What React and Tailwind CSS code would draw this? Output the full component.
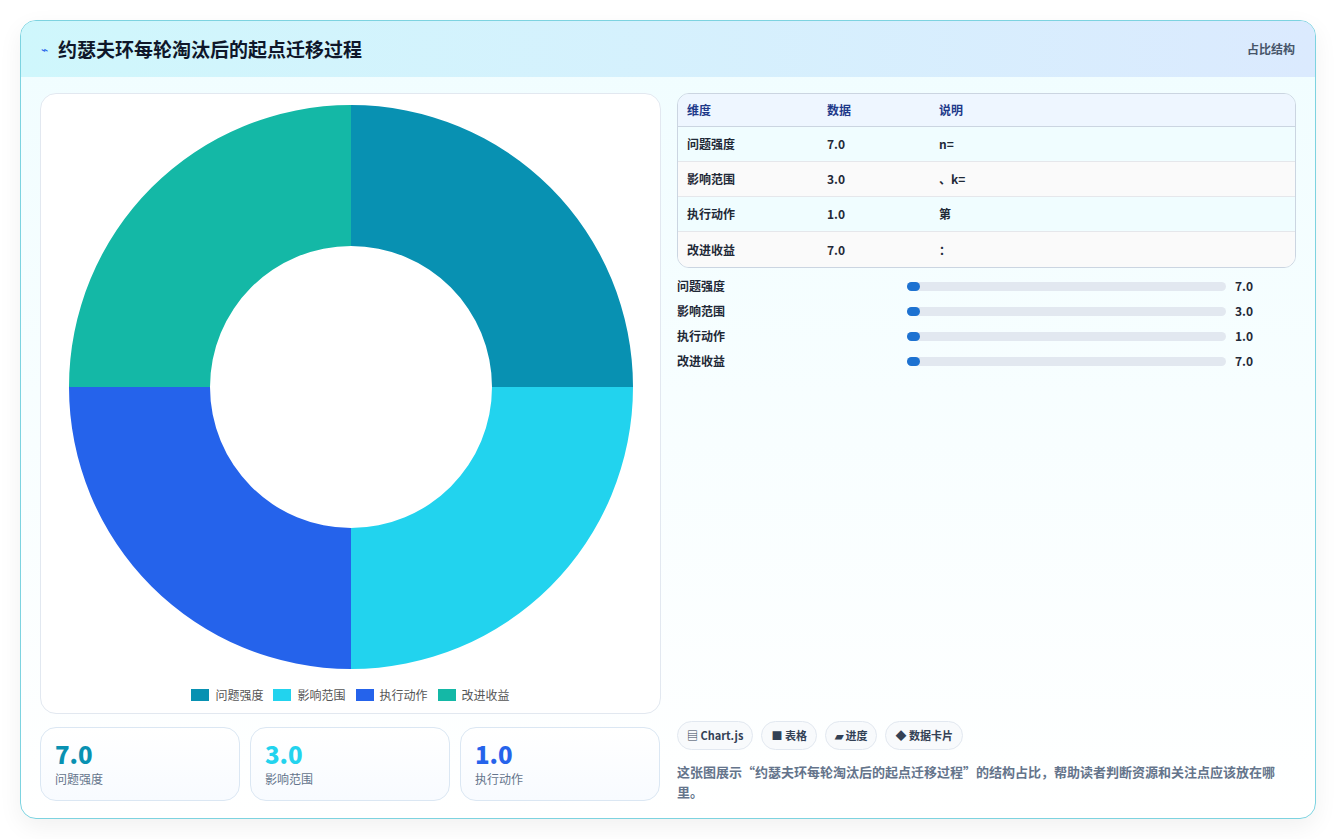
const F = { fontFamily: '"Noto Sans CJK SC","Noto Sans",sans-serif' };
const rows = [["问题强度","7.0","n="],["影响范围","3.0","、k="],["执行动作","1.0","第"],["改进收益","7.0","："]];
const cols = ["#0891b2","#22d3ee","#2563eb","#14b8a6"];
function arc(cx,cy,R,r,a0,a1){const p=(rad,a)=>[cx+rad*Math.sin(a),cy-rad*Math.cos(a)];const[x1,y1]=p(R,a0),[x2,y2]=p(R,a1),[x3,y3]=p(r,a1),[x4,y4]=p(r,a0);return `M${x1} ${y1}A${R} ${R} 0 0 1 ${x2} ${y2}L${x3} ${y3}A${r} ${r} 0 0 0 ${x4} ${y4}Z`;}
export default function App(){
  return <div style={F} className="w-[1336px] h-[839px] bg-white pt-[20px] pl-[20px]">
    <div className="w-[1296px] h-[799px] rounded-2xl border border-[#7dd3e0] bg-gradient-to-b from-[#f0fdff] to-white shadow-[0_8px_24px_rgba(0,0,0,0.06)] overflow-hidden flex flex-col">
      <div className="h-[56px] shrink-0 flex items-center justify-between px-[20px] bg-gradient-to-r from-[#cff7fc] to-[#dbeafe]">
        <div className="flex items-center gap-[10px]"><span className="text-[#2563eb] text-[12px]">⌁</span><span className="text-[19px] font-bold text-[#0f172a]">约瑟夫环每轮淘汰后的起点迁移过程</span></div>
        <span className="text-[12px] font-semibold text-[#475569]">占比结构</span>
      </div>
      <div className="flex flex-1 gap-[16px] px-[19px] pt-[16px] pb-[18px]">
        <div className="w-[621px] flex flex-col gap-[13px]">
          <div className="h-[621px] rounded-2xl border border-[#e2e8f0] bg-white flex flex-col items-center">
            <svg width="620" height="580" className="mt-[10px]">
              {cols.map((c,i)=><path key={i} d={arc(310,283,282,141,i*Math.PI/2,(i+1)*Math.PI/2)} fill={c}/>)}
            </svg>
            <div className="flex gap-[10px] text-[12px] text-[#555] mt-[2px]">
              {rows.map((r,i)=><div key={i} className="flex items-center gap-[6px]"><span className="w-[18px] h-[12px]" style={{background:cols[i]}}/>{r[0]}</div>)}
            </div>
          </div>
          <div className="flex gap-[10px]">
            {rows.slice(0,3).map((r,i)=><div key={i} className="w-[200px] h-[74px] rounded-2xl border border-[#dbe7f3] bg-gradient-to-b from-white to-[#f8fbff] px-[14px] pt-[10px]">
              <div className="text-[24px] font-extrabold leading-[32px]" style={{color:cols[i]}}>{r[1]}</div>
              <div className="text-[12px] text-[#64748b]">{r[0]}</div></div>)}
          </div>
        </div>
        <div className="flex-1 flex flex-col">
          <div className="rounded-xl border border-[#cbd5e1] overflow-hidden text-[12px]">
            <div className="flex h-[33px] items-center bg-[#eef6ff] border-b border-[#cbd5e1] text-[#1e3a8a] font-semibold"><span className="w-[149px] pl-[9px]">维度</span><span className="w-[112px]">数据</span><span>说明</span></div>
            {rows.map((r,i)=><div key={i} className={`flex h-[35px] items-center font-semibold text-[#1f2937] ${i%2?"bg-[#fafafa]":"bg-[#f0fdff]"} ${i<3?"border-b border-[#e5e7eb]":""}`}><span className="w-[149px] pl-[9px]">{r[0]}</span><span className="w-[112px]">{r[1]}</span><span>{r[2]}</span></div>)}
          </div>
          <div className="flex flex-col gap-[9px] mt-[10px]">
            {rows.map((r,i)=><div key={i} className="flex items-center h-[16px] text-[12px] font-semibold text-[#1f2937]"><span className="w-[230px]">{r[0]}</span><div className="w-[319px] h-[9px] rounded-full bg-[#e2e8f0]"><div className="w-[13px] h-[9px] rounded-full bg-[#1d72d1]"/></div><span className="ml-[9px]">{r[1]}</span></div>)}
          </div>
          <div className="mt-auto flex gap-[8px] text-[11px] font-semibold text-[#334155]">
            {["▤ Chart.js","■ 表格","▰ 进度","◆ 数据卡片"].map(t=><span key={t} className="h-[29px] px-[9px] flex items-center rounded-full border border-[#e2e8f0] bg-[#f8fafc]">{t}</span>)}
          </div>
          <p className="mt-[12px] text-[13px] font-semibold text-[#64748b]">这张图展示“约瑟夫环每轮淘汰后的起点迁移过程”的结构占比，帮助读者判断资源和关注点应该放在哪里。</p>
        </div>
      </div>
    </div>
  </div>;
}
